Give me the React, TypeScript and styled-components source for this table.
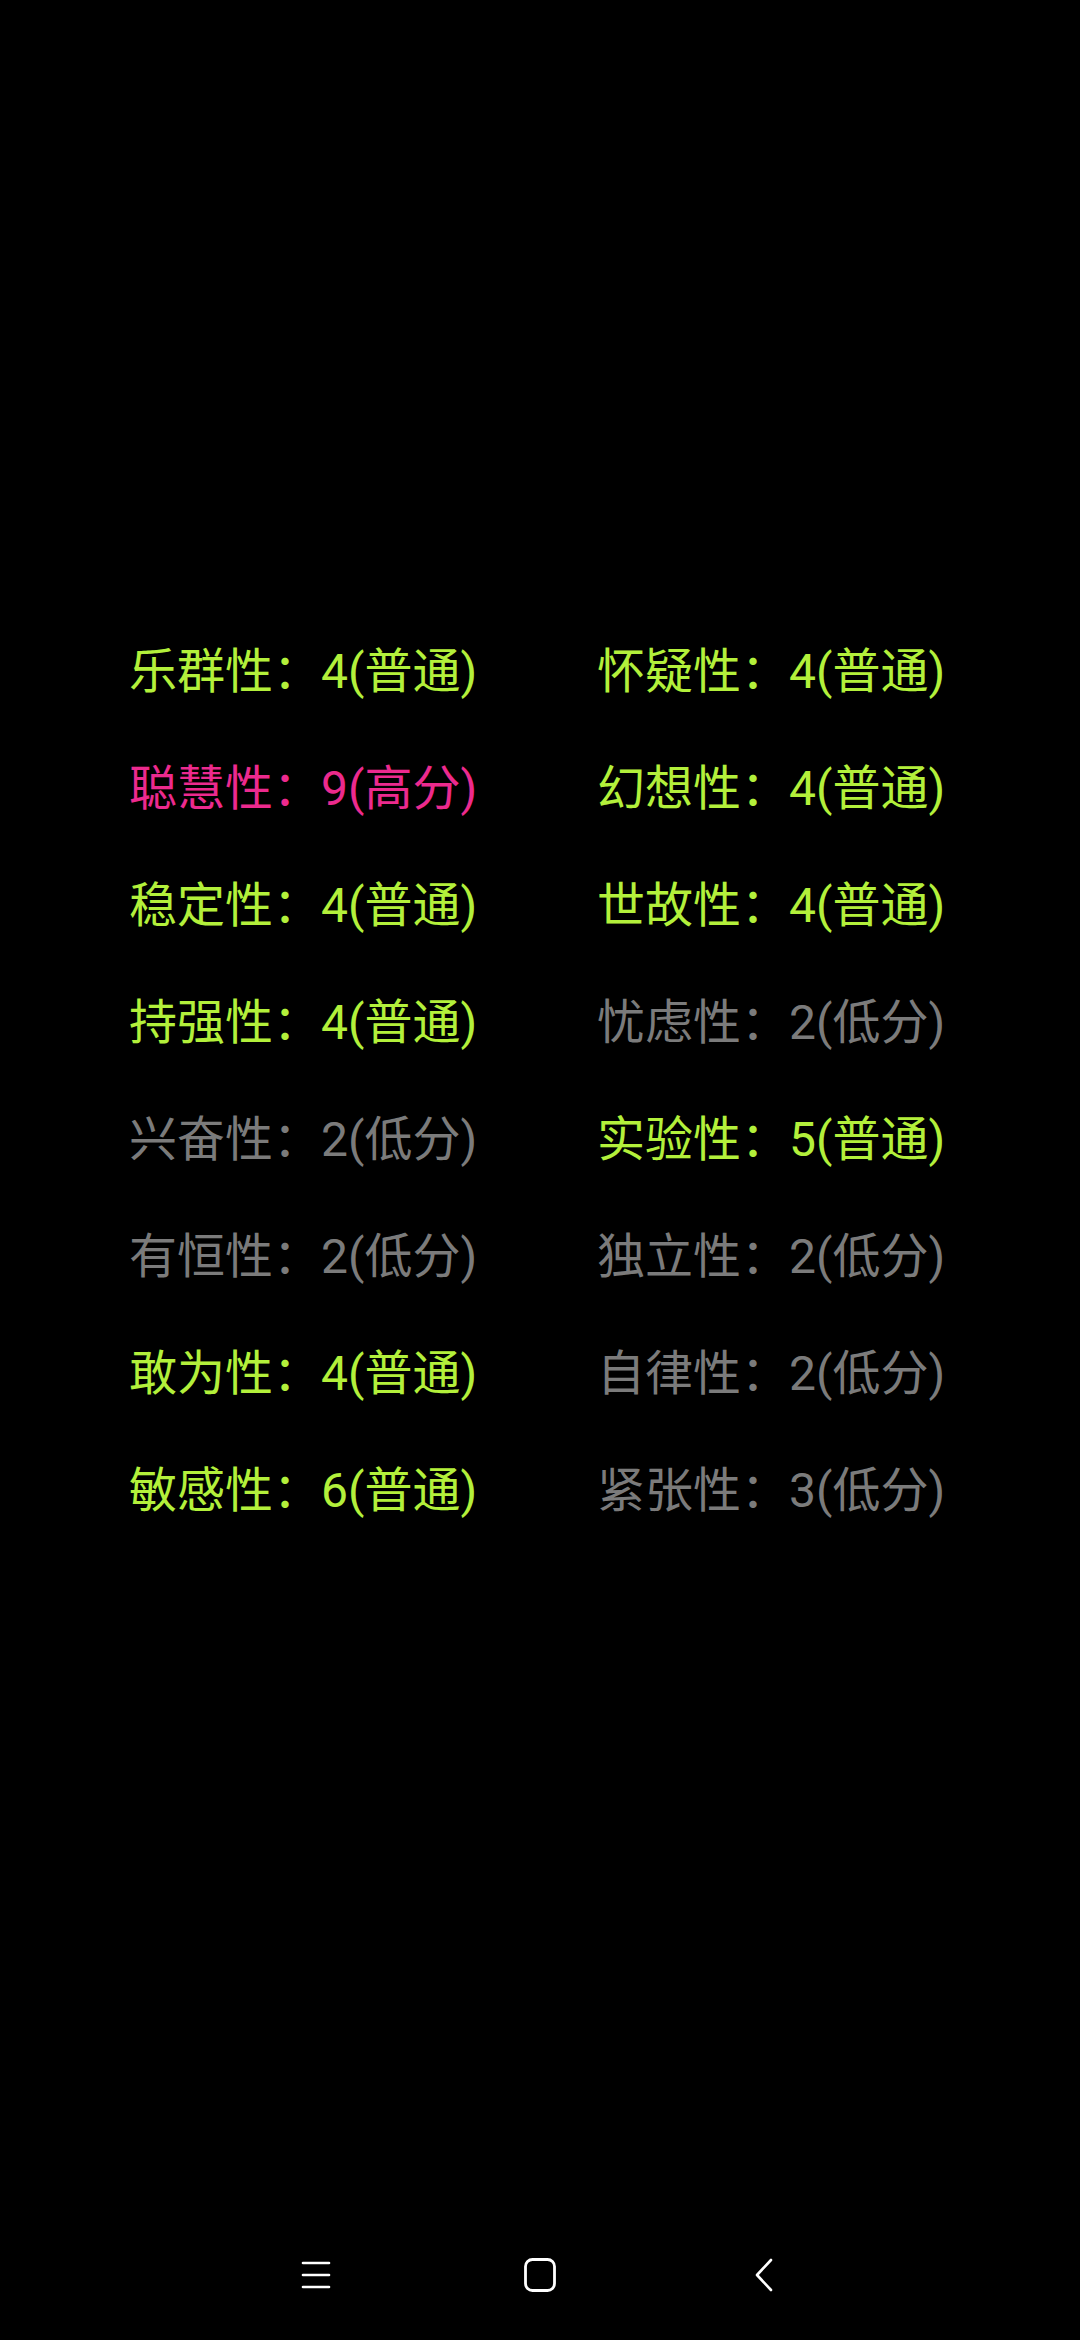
import styled, { createGlobalStyle } from "styled-components";

const GlobalStyle = createGlobalStyle`
  html, body {
    margin: 0;
    padding: 0;
    background: #000;
  }
`;

type Level = "normal" | "high" | "low";

const colors: Record<Level, string> = {
  normal: "#b3f03b",
  high: "#ec2a8e",
  low: "#7b7b7b",
};

const traits: { name: string; score: number; level: Level }[][] = [
  [
    { name: "乐群性", score: 4, level: "normal" },
    { name: "怀疑性", score: 4, level: "normal" },
  ],
  [
    { name: "聪慧性", score: 9, level: "high" },
    { name: "幻想性", score: 4, level: "normal" },
  ],
  [
    { name: "稳定性", score: 4, level: "normal" },
    { name: "世故性", score: 4, level: "normal" },
  ],
  [
    { name: "持强性", score: 4, level: "normal" },
    { name: "忧虑性", score: 2, level: "low" },
  ],
  [
    { name: "兴奋性", score: 2, level: "low" },
    { name: "实验性", score: 5, level: "normal" },
  ],
  [
    { name: "有恒性", score: 2, level: "low" },
    { name: "独立性", score: 2, level: "low" },
  ],
  [
    { name: "敢为性", score: 4, level: "normal" },
    { name: "自律性", score: 2, level: "low" },
  ],
  [
    { name: "敏感性", score: 6, level: "normal" },
    { name: "紧张性", score: 3, level: "low" },
  ],
];

const levelLabel: Record<Level, string> = {
  normal: "普通",
  high: "高分",
  low: "低分",
};

const Page = styled.div`
  width: 1080px;
  height: 2340px;
  background: #000;
  display: flex;
  flex-direction: column;
  font-family: Roboto, "Noto Sans CJK SC", sans-serif;
`;

const TraitGrid = styled.div`
  display: grid;
  grid-template-columns: 468px 1fr;
  padding: 613px 0 0 129px;
`;

const TraitCell = styled.div<{ $level: Level }>`
  font-size: 48px;
  line-height: 117px;
  height: 117px;
  white-space: nowrap;
  color: ${(p) => colors[p.$level]};
`;

const NavBar = styled.div`
  margin-top: auto;
  height: 130px;
  display: flex;
  align-items: center;
  justify-content: center;
`;

const NavButton = styled.div`
  width: 224px;
  height: 130px;
  display: flex;
  align-items: center;
  justify-content: center;
`;

const NavIcons = () => (
  <NavBar>
    <NavButton>
      <svg width="30" height="28" viewBox="0 0 30 28">
        <g stroke="#fff" strokeWidth="2.6" strokeLinecap="round">
          <line x1="2" y1="2" x2="28" y2="2" />
          <line x1="2" y1="14" x2="28" y2="14" />
          <line x1="2" y1="26" x2="28" y2="26" />
        </g>
      </svg>
    </NavButton>
    <NavButton>
      <svg width="32" height="34" viewBox="0 0 32 34">
        <rect
          x="1.5"
          y="1.5"
          width="29"
          height="31"
          rx="7"
          fill="none"
          stroke="#fff"
          strokeWidth="2.8"
        />
      </svg>
    </NavButton>
    <NavButton>
      <svg width="18" height="34" viewBox="0 0 18 34">
        <polyline
          points="16,2 2,17 16,32"
          fill="none"
          stroke="#fff"
          strokeWidth="2.6"
          strokeLinecap="round"
          strokeLinejoin="round"
        />
      </svg>
    </NavButton>
  </NavBar>
);

export default function App() {
  return (
    <>
      <GlobalStyle />
      <Page>
        <TraitGrid>
          {traits.flat().map((t) => (
            <TraitCell key={t.name} $level={t.level}>
              {t.name}：{t.score}({levelLabel[t.level]})
            </TraitCell>
          ))}
        </TraitGrid>
        <NavIcons />
      </Page>
    </>
  );
}
